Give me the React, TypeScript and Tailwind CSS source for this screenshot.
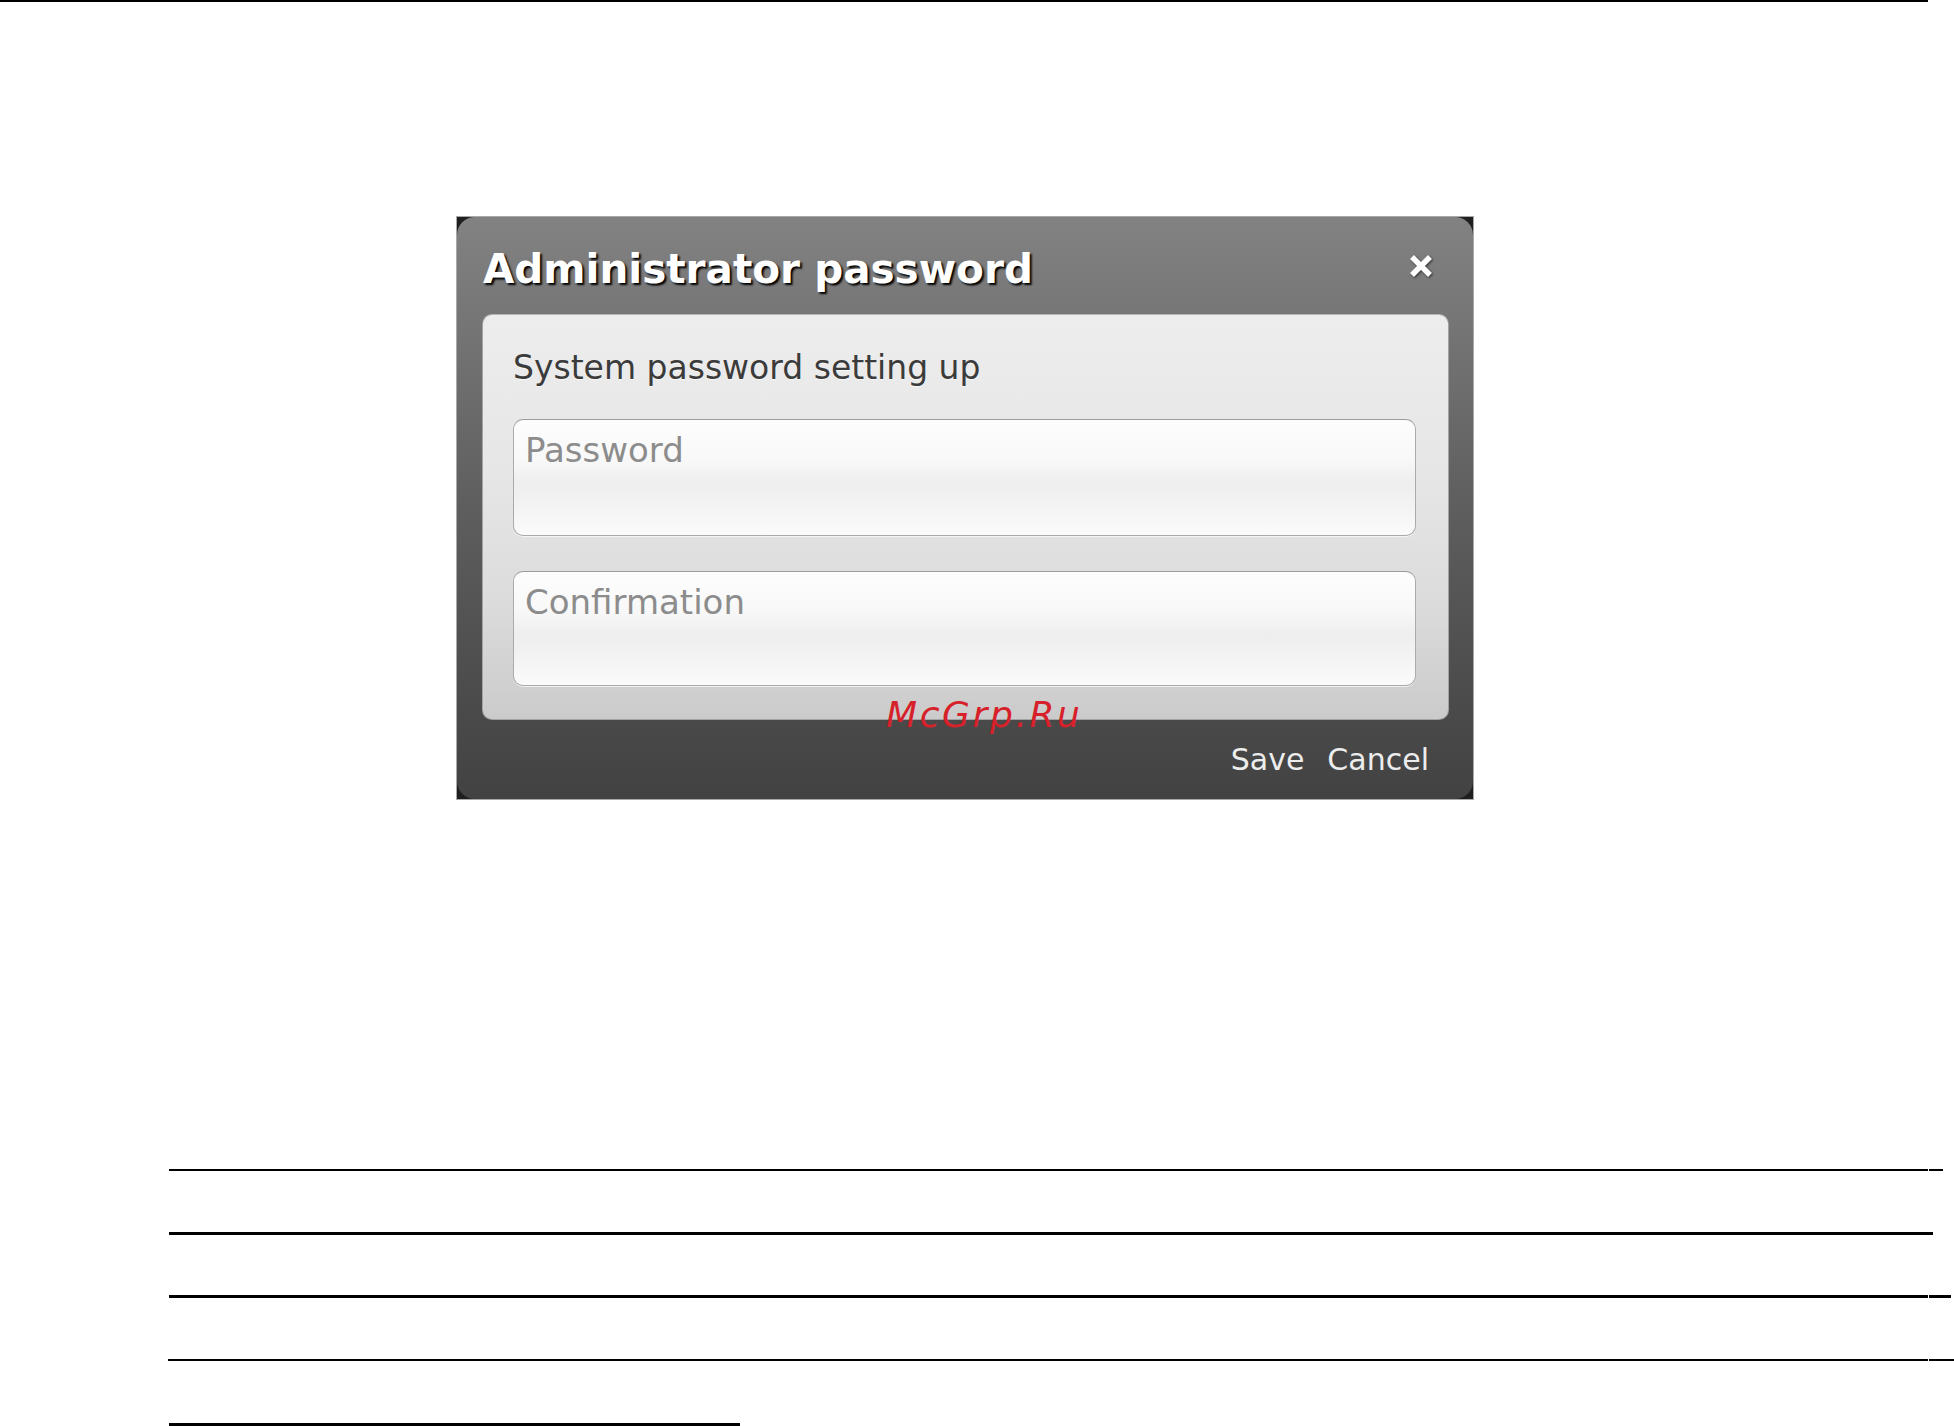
import React from 'react';

function CloseIcon() {
  return (
    <svg width="26" height="26" viewBox="0 0 26 26" className="drop-shadow-[1px_1px_1px_rgba(0,0,0,0.6)]">
      <path d="M4 4 L22 22 M22 4 L4 22" stroke="#ffffff" strokeWidth="5.5" strokeLinecap="butt" fill="none" />
    </svg>
  );
}

function Field({ placeholder, height }: { placeholder: string; height: string }) {
  return (
    <div
      className={`${height} w-[903px] rounded-[10px] border border-[#ababab] border-t-[#9c9c9c] bg-[linear-gradient(to_bottom,#fdfdfd_0%,#f8f8f8_35%,#eeeeee_55%,#f3f3f3_75%,#fbfbfb_100%)] pl-[11px] pt-[10px] shadow-[0_1px_0_rgba(255,255,255,0.7)]`}
    >
      <span className="block font-['DejaVu_Sans',sans-serif] text-[34px] leading-[40px] text-[#8c8c8c]">
        {placeholder}
      </span>
    </div>
  );
}

function Rule({ top, thick, width, tail, left = 'ml-[169px]' }: { top: string; thick: string; width: string; tail?: string; left?: string }) {
  return (
    <div className={`${left} ${top} ${thick} flex`}>
      <div className={`${width} bg-black`} />
      {tail && <div className={`ml-[1px] ${tail} bg-black`} />}
    </div>
  );
}

export default function App() {
  return (
    <div className="flex h-[1426px] w-[1954px] flex-col overflow-hidden bg-white">
      {/* page rule */}
      <div className="h-[2px] w-[1928px] bg-black" />

      {/* dialog */}
      <div className="ml-[456px] mt-[214px] h-[585px] w-[1018px] border border-[#a9a9a9] bg-[#1f1f1f]">
        <div className="relative flex h-full flex-col rounded-[18px] bg-[linear-gradient(to_bottom,#828282_0%,#747474_20%,#5e5e5e_50%,#4a4a4a_85%,#424242_100%)]">
          <div className="flex h-[97px] items-start justify-between pl-[26px] pr-[39px] pt-[28px]">
            <h1 className="font-['DejaVu_Sans',sans-serif] text-[40.5px] font-bold leading-[48px] text-white [text-shadow:2px_2px_2px_#000]">
              Administrator password
            </h1>
            <button className="mt-[8px]">
              <CloseIcon />
            </button>
          </div>

          <div className="ml-[25px] mr-[24px] flex h-[406px] flex-col rounded-[10px] border border-[#a3a3a3] border-t-[#b5b5b5] bg-[linear-gradient(to_bottom,#ededed_0%,#e6e6e6_40%,#dcdcdc_70%,#cbcbcb_100%)] pl-[30px] pt-[33px]">
            <p className="font-['DejaVu_Sans',sans-serif] text-[33px] leading-[40px] text-[#3b3b3b] [text-shadow:0_1px_0_rgba(255,255,255,0.7)]">
              System password setting up
            </p>
            <div className="mt-[31px]">
              <Field placeholder="Password" height="h-[117px]" />
            </div>
            <div className="mt-[35px]">
              <Field placeholder="Confirmation" height="h-[115px]" />
            </div>
          </div>

          <div className="mt-[22px] flex justify-end gap-[23px] pr-[44px] font-['DejaVu_Sans',sans-serif] text-[30px] leading-[36px] text-[#ededed]">
            <button>Save</button>
            <button>Cancel</button>
          </div>

          <span className="absolute left-[429px] top-[478px] font-['DejaVu_Sans',sans-serif] text-[36px] italic leading-[40px] tracking-[2.6px] text-[#d7212a]">
            McGrp.Ru
          </span>
        </div>
      </div>

      {/* form rules */}
      <Rule top="mt-[369px]" thick="h-[2px]" width="w-[1759px]" tail="w-[14px]" />
      <Rule top="mt-[61px]" thick="h-[3px]" width="w-[1764px]" />
      <Rule top="mt-[60px]" thick="h-[3px]" width="w-[1759px]" tail="w-[22px]" />
      <Rule top="mt-[61px]" thick="h-[2px]" width="w-[1760px]" tail="w-[25px]" left="ml-[168px]" />
      <Rule top="mt-[62px]" thick="h-[3px]" width="w-[571px]" />
    </div>
  );
}
